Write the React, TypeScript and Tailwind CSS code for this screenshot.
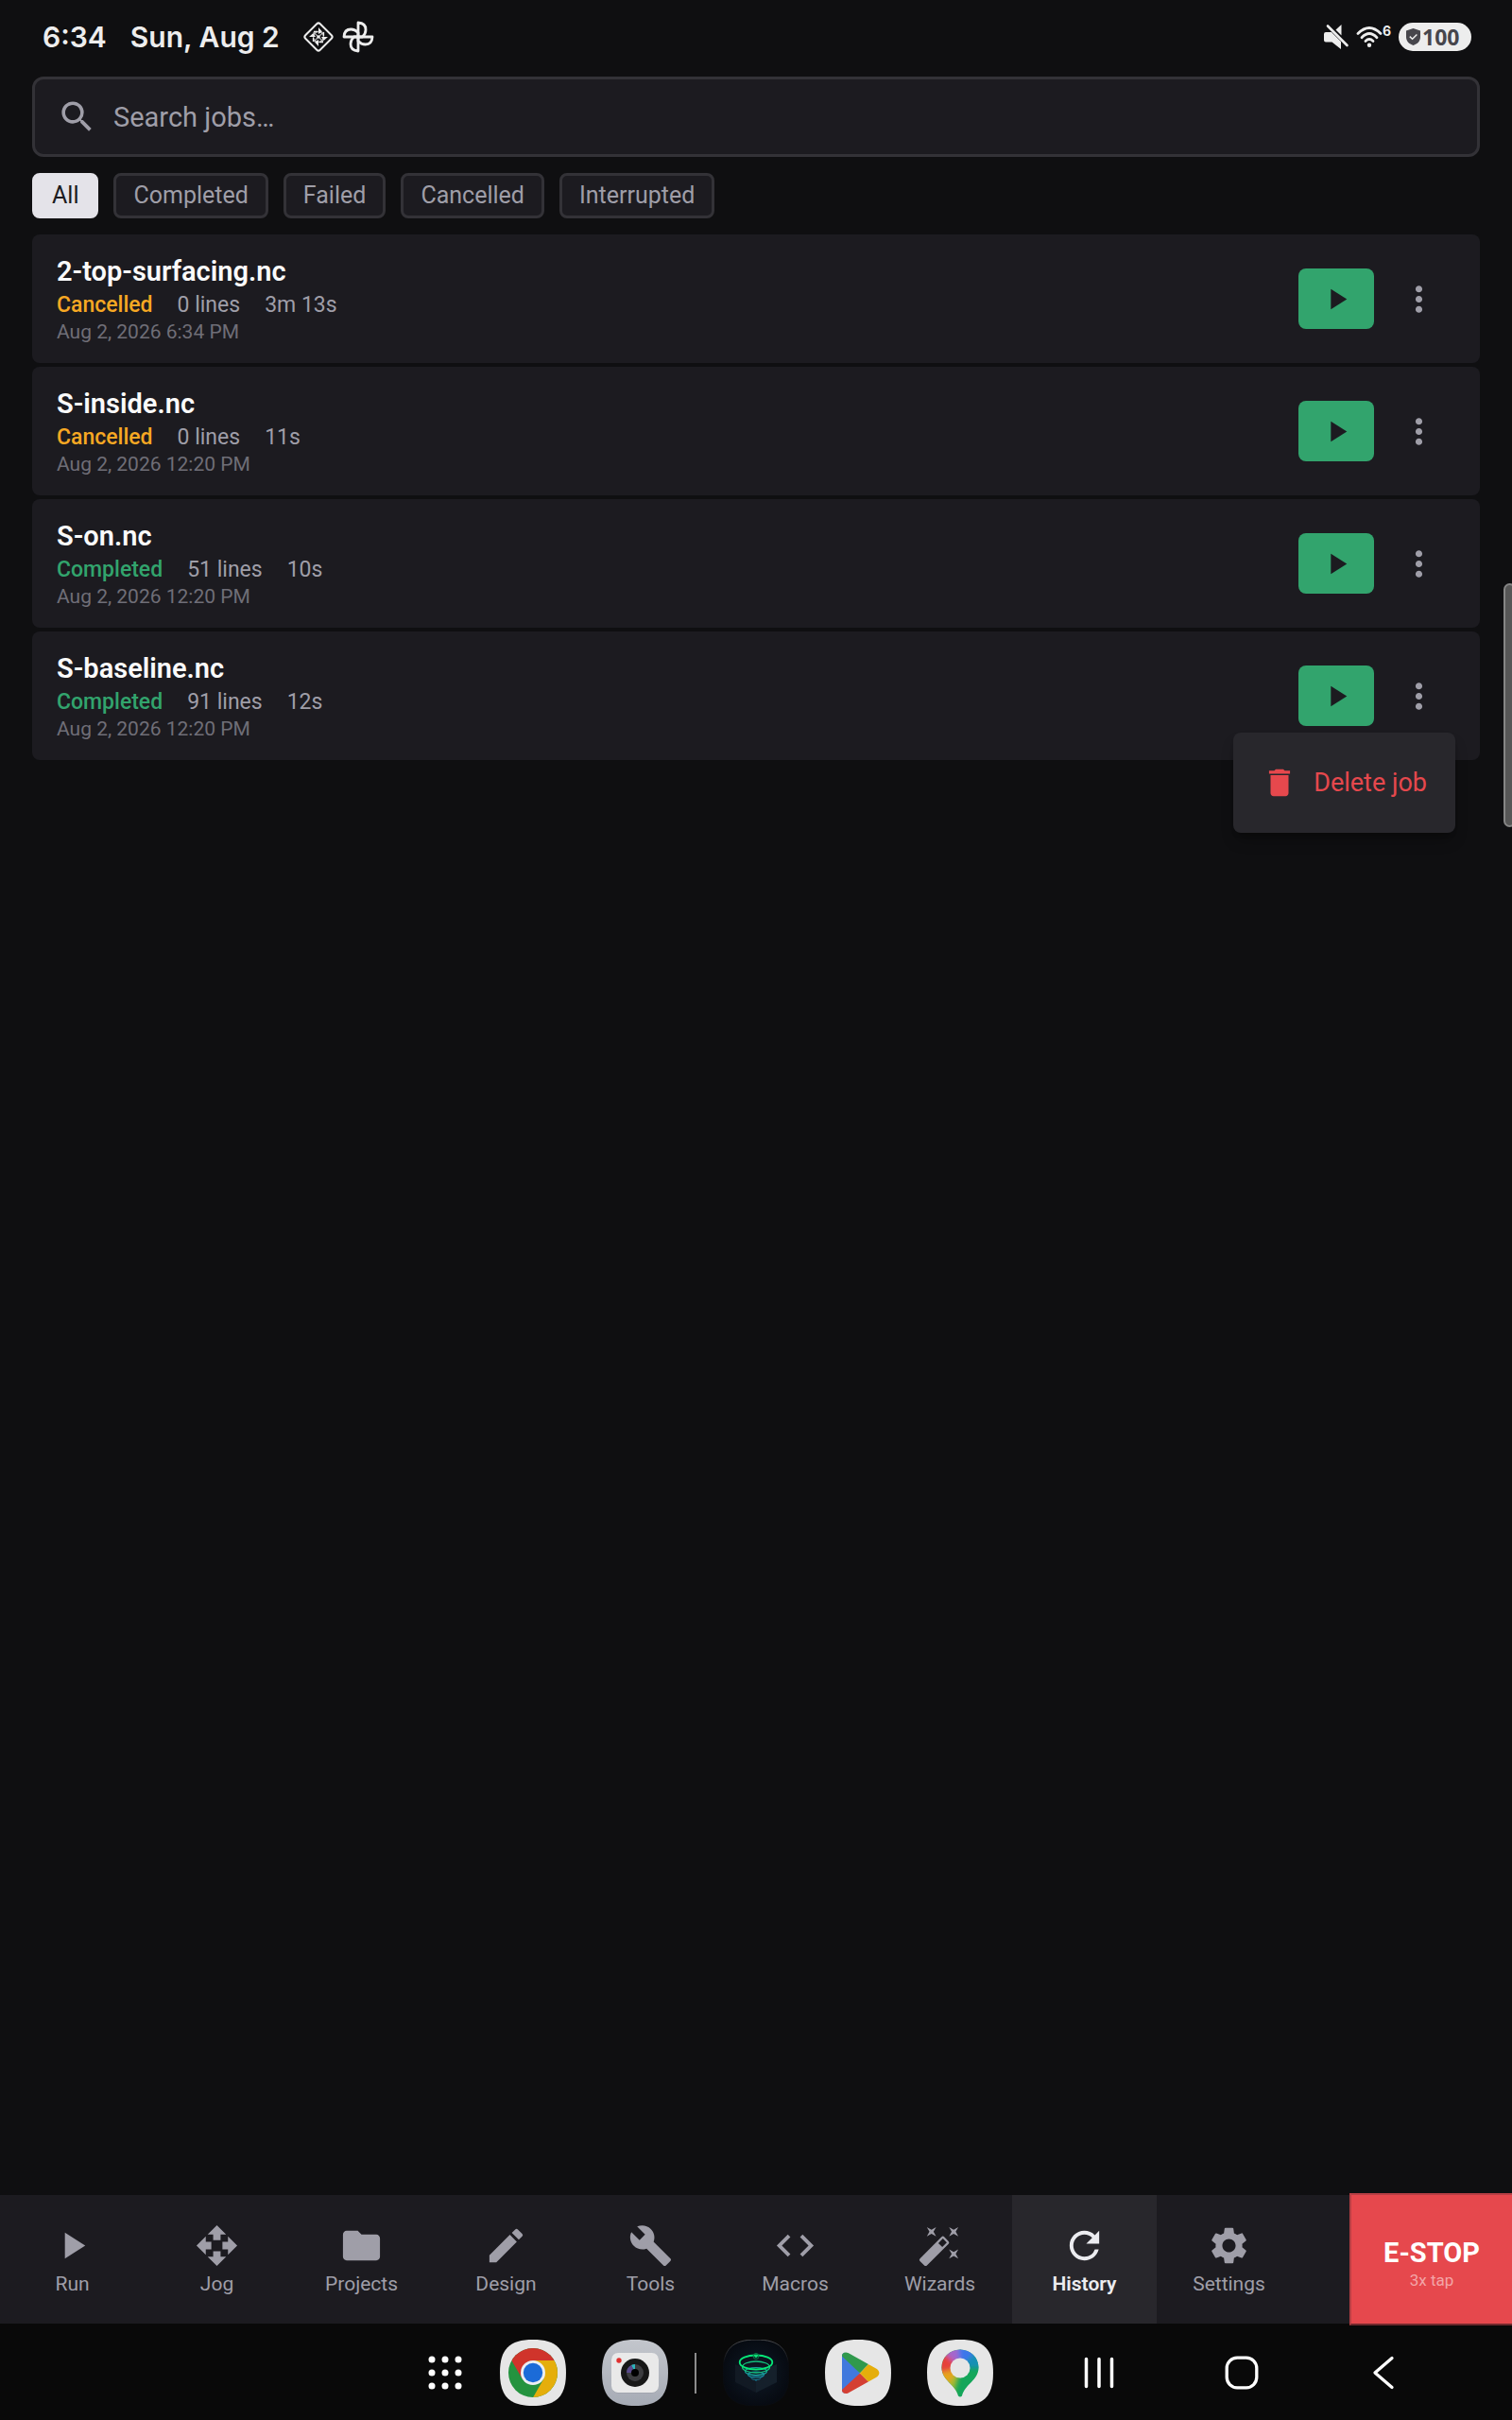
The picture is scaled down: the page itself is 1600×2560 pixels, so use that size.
import type { ReactNode } from "react";
import type { IconType } from "react-icons";
import {
  MdAutoFixHigh,
  MdBuild,
  MdCode,
  MdDelete,
  MdEdit,
  MdFolder,
  MdMoreVert,
  MdOpenWith,
  MdPlayArrow,
  MdRefresh,
  MdSearch,
  MdSettings,
} from "react-icons/md";

type Job = {
  name: string;
  status: "Completed" | "Cancelled";
  lines: string;
  duration: string;
  date: string;
};

const jobs: Job[] = [
  { name: "2-top-surfacing.nc", status: "Cancelled", lines: "0 lines", duration: "3m 13s", date: "Aug 2, 2026 6:34 PM" },
  { name: "S-inside.nc", status: "Cancelled", lines: "0 lines", duration: "11s", date: "Aug 2, 2026 12:20 PM" },
  { name: "S-on.nc", status: "Completed", lines: "51 lines", duration: "10s", date: "Aug 2, 2026 12:20 PM" },
  { name: "S-baseline.nc", status: "Completed", lines: "91 lines", duration: "12s", date: "Aug 2, 2026 12:20 PM" },
];

const filters = ["All", "Completed", "Failed", "Cancelled", "Interrupted"];

const tabs: { label: string; Icon: IconType }[] = [
  { label: "Run", Icon: MdPlayArrow },
  { label: "Jog", Icon: MdOpenWith },
  { label: "Projects", Icon: MdFolder },
  { label: "Design", Icon: MdEdit },
  { label: "Tools", Icon: MdBuild },
  { label: "Macros", Icon: MdCode },
  { label: "Wizards", Icon: MdAutoFixHigh },
  { label: "History", Icon: MdRefresh },
  { label: "Settings", Icon: MdSettings },
];

const SQUIRCLE = "M35 0C60 0 70 10 70 35S60 70 35 70S0 60 0 35S10 0 35 0Z";

function DiamondIcon() {
  return (
    <svg viewBox="0 0 34 34" className="size-[34px]" fill="none" stroke="#ededed">
      <rect x="6" y="6" width="22" height="22" rx="2.5" strokeWidth="2" transform="rotate(45 17 17)" />
      <g fill="#ededed" stroke="none">
        <path d="M17 7L21 11.500L17 14Z" />
        <path d="M27 17L22.500 21L20 17Z" />
        <path d="M17 27L13 22.500L17 20Z" />
        <path d="M7 17L11.500 13L14 17Z" />
      </g>
      <g strokeWidth="1.3">
        <path d="M12 11.500H16M22.500 12V16M22 22.500H18M11.500 22V18" />
        <path d="M11.500 12L16 16M22.500 12L18 16M22 22L18 18M12 22L16 18" opacity="0.7" />
        <circle cx="17" cy="17" r="5.500" opacity="0.7" />
      </g>
      <circle cx="17" cy="17" r="1.800" fill="#ededed" stroke="none" />
    </svg>
  );
}

function PinwheelIcon() {
  const blade = "M17 17V2C22 2.200 25 5 25 9.400C25 12.500 23.600 15 21.500 17Z";
  return (
    <svg viewBox="0 0 34 34" className="size-[34px]" fill="none" stroke="#ededed" strokeWidth="2.8" strokeLinejoin="round">
      <path d={blade} />
      <path d={blade} transform="rotate(90 17 17)" />
      <path d={blade} transform="rotate(180 17 17)" />
      <path d={blade} transform="rotate(270 17 17)" />
    </svg>
  );
}

function MuteIcon() {
  return (
    <svg viewBox="0 0 28 28" className="size-[28px]" fill="#ededed">
      <path d="M1 11Q1 9 3 9H9L19 19V27L9.500 19.500H3Q1 19.500 1 17.500Z" />
      <path d="M13.500 6.500L19.500 1V12.500Z" />
      <path d="M5 2.500L25.500 23" stroke="#ededed" strokeWidth="2.600" strokeLinecap="round" />
    </svg>
  );
}

function WifiIcon() {
  return (
    <svg viewBox="0 0 28 24" className="h-[24px] w-[28px]" fill="none" stroke="#ededed" strokeWidth="2.8" strokeLinecap="round">
      <path d="M2 8.500Q14 -3.500 26 8.500" />
      <path d="M6 12.700Q14 4.300 22 12.700" />
      <path d="M10 16.500Q14 12.600 18 16.500" />
      <circle cx="14" cy="20.800" r="2.200" fill="#ededed" stroke="none" />
    </svg>
  );
}

function StatusBar() {
  return (
    <header className="flex h-[78px] items-center justify-between pr-[43px] pl-[45px] font-['Inter',sans-serif] text-[#ededed]">
      <div className="flex items-center">
        <span className="text-[30px] leading-none font-semibold">6:34</span>
        <span className="ml-[25px] text-[30px] leading-none font-semibold">Sun, Aug 2</span>
        <span className="ml-[24px] flex gap-[8px]">
          <DiamondIcon />
          <PinwheelIcon />
        </span>
      </div>
      <div className="flex items-center">
        <MuteIcon />
        <span className="ml-[7px] flex items-start">
          <WifiIcon />
          <span className="text-[14px] leading-[12px] font-bold">6</span>
        </span>
        <span className="ml-[8px] flex h-[30px] w-[77px] items-center rounded-full bg-[#ededed] pl-[8px] text-[#47464c]">
          <svg viewBox="0 0 15 18" className="h-[18px] w-[15px]">
            <path d="M7.500 0L15 2.500V9C15 13.500 12 16.500 7.500 18C3 16.500 0 13.500 0 9V2.500Z" fill="#47464c" />
            <path d="M3.800 8.600L6.600 11.200L11.400 6.500" fill="none" stroke="#ededed" strokeWidth="1.500" />
          </svg>
          <span className="ml-[2px] font-['Open_Sans',sans-serif] text-[23px] leading-none font-bold">100</span>
        </span>
      </div>
    </header>
  );
}

function JobCard({ job, children }: { job: Job; children?: ReactNode }) {
  const statusColor = job.status === "Cancelled" ? "text-[#f7a823]" : "text-[#32a46d]";
  return (
    <li className="relative flex items-center rounded-lg bg-[#1c1b20] pt-[18px] pr-[26px] pb-[18px] pl-[26px]">
      <div className="min-w-0 flex-1 pb-[2px]">
        <h2 className="text-[29px] leading-[42px] font-semibold text-[#fafafa]">{job.name}</h2>
        <p className="flex gap-[26px] text-[23px] leading-[30px] text-[#9f9ea8]">
          <span className={`font-medium ${statusColor}`}>{job.status}</span>
          <span>{job.lines}</span>
          <span>{job.duration}</span>
        </p>
        <p className="text-[21px] leading-[26px] text-[#6f6e77]">{job.date}</p>
      </div>
      <button type="button" aria-label={`Run ${job.name}`} className="flex h-[64px] w-[80px] items-center justify-center rounded-lg bg-[#32a46d] text-[#1c1b20]">
        <MdPlayArrow className="size-[37px]" />
      </button>
      <button type="button" aria-label={`More actions for ${job.name}`} className="ml-[8px] flex h-[64px] w-[78px] items-center justify-center text-[#9f9ea8]">
        <MdMoreVert className="size-[43px]" />
      </button>
      {children}
    </li>
  );
}

function JobMenu() {
  return (
    <div role="menu" className="absolute top-[107px] right-[26px] z-10 rounded-lg bg-[#28272c] py-[8px] shadow-lg shadow-black/30">
      <button type="button" role="menuitem" className="flex h-[90px] items-center pr-[30px] pl-[30px] text-[27px] text-[#e6484d]">
        <MdDelete className="size-[38px]" />
        <span className="ml-[17px] whitespace-nowrap">Delete job</span>
      </button>
    </div>
  );
}

function TabBar() {
  return (
    <nav className="flex h-[136px] bg-[#1c1b20] text-[#9f9ea8]">
      {tabs.map(({ label, Icon }) => {
        const active = label === "History";
        return (
          <button
            key={label}
            type="button"
            aria-current={active ? "page" : undefined}
            className={`flex min-w-0 flex-[153] flex-col items-center pt-[30px] ${active ? "bg-[#28272c] font-semibold text-[#ececf0]" : ""}`}
          >
            <Icon className="size-[47px]" />
            <span className="mt-[4px] text-[21px] leading-[26px]">{label}</span>
          </button>
        );
      })}
      <div className="flex-[51]" />
      <button
        type="button"
        className="relative -my-[2px] flex w-[172px] shrink-0 flex-col items-center justify-center border-y-2 border-l-2 border-t-[#b83f44] border-b-[#70282c] border-l-[#b83f44] bg-[#e6484d] pt-[8px]"
      >
        <span className="text-[29px] leading-[36px] font-bold text-white">E-STOP</span>
        <span className="text-[17px] leading-[22px] text-[#f3a5a8]">3x tap</span>
      </button>
    </nav>
  );
}

function AppTile({ label, children }: { label: string; children: ReactNode }) {
  return (
    <button type="button" aria-label={label} className="size-[70px] shrink-0">
      <svg viewBox="0 0 70 70" className="size-[70px]">
        {children}
      </svg>
    </button>
  );
}

function ChromeTile() {
  return (
    <AppTile label="Chrome">
      <path d={SQUIRCLE} fill="#e6e6e6" />
      <clipPath id="chrome-disc">
        <circle cx="35" cy="35" r="26" />
      </clipPath>
      <g clipPath="url(#chrome-disc)">
        <rect width="70" height="70" fill="#24933f" />
        <path d="M35 22H70V70H30L46.300 41.500Z" fill="#e5ae0b" />
        <path d="M0 0H70V22H35L23.700 41.500L10 18Z" fill="#d0342b" />
      </g>
      <circle cx="35" cy="35" r="13" fill="#ebeef2" />
      <circle cx="35" cy="35" r="10.200" fill="#1b6bd8" />
    </AppTile>
  );
}

function CameraTile() {
  return (
    <AppTile label="Camera">
      <defs>
        <linearGradient id="camera-bg" x1="0" y1="0" x2="0" y2="1">
          <stop offset="0" stopColor="#c3c6cc" />
          <stop offset="1" stopColor="#a6abb5" />
        </linearGradient>
      </defs>
      <path d={SQUIRCLE} fill="url(#camera-bg)" />
      <rect x="10" y="14.500" width="50" height="42" rx="7" fill="#8d9199" opacity="0.600" />
      <rect x="10" y="14" width="50" height="42" rx="7" fill="#e9e9e9" />
      <circle cx="18" cy="22" r="2.700" fill="#e02f2f" />
      <circle cx="35" cy="35" r="15" fill="#171717" />
      <circle cx="35" cy="35" r="9" fill="#3d3d40" />
      <path d="M35 35V26A9 9 0 0 0 31 27Z" fill="#2cb3bb" />
      <path d="M35 35L31 27A9 9 0 0 0 26 35Z" fill="#5a4a8c" />
      <circle cx="35" cy="35" r="4" fill="#000" />
    </AppTile>
  );
}

function CncTile() {
  return (
    <AppTile label="CNC controller">
      <defs>
        <radialGradient id="cnc-bg">
          <stop offset="0" stopColor="#0f1a28" />
          <stop offset="1" stopColor="#070b12" />
        </radialGradient>
        <linearGradient id="cnc-rim" x1="0" y1="0" x2="0" y2="1">
          <stop offset="0" stopColor="#4a4b4e" />
          <stop offset="0.350" stopColor="#090c11" />
        </linearGradient>
      </defs>
      <path d={SQUIRCLE} fill="url(#cnc-bg)" stroke="url(#cnc-rim)" />
      <path d="M13 26L35 36L57 26V45L35 56L13 45Z" fill="#121a24" />
      <path d="M35 36L57 26V45L35 56Z" fill="#15202b" />
      <g fill="none">
        <ellipse cx="35" cy="40.500" rx="5" ry="2" stroke="#167690" />
        <ellipse cx="35" cy="37" rx="8.500" ry="3" stroke="#178a9c" strokeWidth="1.200" />
        <ellipse cx="35" cy="33.500" rx="11.500" ry="4" stroke="#17a19a" strokeWidth="1.200" />
        <ellipse cx="35" cy="29" rx="14.500" ry="6" stroke="#12c27e" strokeWidth="1.300" />
        <ellipse cx="35" cy="24" rx="17.300" ry="7.500" stroke="#07e878" strokeWidth="1.800" />
        <path d="M35 42V43.500" stroke="#167690" strokeWidth="2" />
        <circle cx="35" cy="17.500" r="3" stroke="#0a7a48" />
      </g>
      <circle cx="35" cy="17.500" r="1.500" fill="#0fdc76" />
    </AppTile>
  );
}

function PlayStoreTile() {
  return (
    <AppTile label="Play Store">
      <path d={SQUIRCLE} fill="#e6e6e6" />
      <clipPath id="play-shape">
        <path d="M18 17C18 14 21.500 12.500 24.500 14L54 30.500C58.500 33 58.500 37.500 54 40L24.500 56.500C21.500 58 18 56.500 18 53.500Z" />
      </clipPath>
      <g clipPath="url(#play-shape)">
        <path d="M18 10V60L37 35.500Z" fill="#4179dd" />
        <path d="M18 17.500V10H50L46 26L37 35.500Z" fill="#30994c" />
        <path d="M18 53V62H50L46 44.500L37 35.500Z" fill="#d43f33" />
        <path d="M46 26L62 30V42L46 44.500L37 35.500Z" fill="#e5ae0b" />
      </g>
    </AppTile>
  );
}

function MapsTile() {
  return (
    <AppTile label="Maps">
      <path d={SQUIRCLE} fill="#e6e6e6" />
      <clipPath id="maps-pin">
        <path d="M35 10.500C24 10.500 15.500 19 15.500 29.500C15.500 43 30 47 33 59.500Q35 61.500 37 59.500C40 47 54.500 43 54.500 29.500C54.500 19 46 10.500 35 10.500Z" />
      </clipPath>
      <filter id="maps-soft">
        <feGaussianBlur stdDeviation="2.500" />
      </filter>
      <g clipPath="url(#maps-pin)">
        <rect width="70" height="70" fill="#14a65a" />
        <g filter="url(#maps-soft)">
          <path d="M35 30L0 34V64H26L33 40Z" fill="#a6b932" />
          <path d="M35 30L0 32V44L18 52Z" fill="#e6a41c" />
          <path d="M35 30L0 38V14H20Z" fill="#e5433a" />
          <path d="M35 30L18 14L26 0L36 4Z" fill="#a566cc" />
          <path d="M35 30L32 0H60L52 18Z" fill="#3c77ea" />
          <path d="M35 30L50 14L70 10V30Z" fill="#1490b5" />
        </g>
      </g>
      <circle cx="35" cy="30" r="10.500" fill="#e6e6e6" />
    </AppTile>
  );
}

function Taskbar() {
  return (
    <footer className="flex h-[102px] items-center justify-end bg-[#090909] pt-[2px] pr-[60px]">
      <button type="button" aria-label="All apps" className="shrink-0">
        <svg viewBox="0 0 36 36" className="size-[36px]" fill="#fff">
          {[4, 18, 32].map((y) => [4, 18, 32].map((x) => <circle key={`${x}-${y}`} cx={x} cy={y} r="3.500" />))}
        </svg>
      </button>
      <div className="ml-[40px] flex gap-[38px]">
        <ChromeTile />
        <CameraTile />
      </div>
      <div className="mx-[28px] h-[43px] w-[2px] bg-[#8c8c8c]" />
      <div className="mr-[36px] flex gap-[38px]">
        <CncTile />
        <PlayStoreTile />
        <MapsTile />
      </div>
      <button type="button" aria-label="Recent apps" className="flex w-[151px] justify-center">
        <svg viewBox="0 0 36 36" className="size-[36px]" stroke="#fff" strokeWidth="3.500" strokeLinecap="round">
          <path d="M4.500 3.500V32.500M18 3.500V32.500M31.500 3.500V32.500" />
        </svg>
      </button>
      <button type="button" aria-label="Home" className="flex w-[151px] justify-center">
        <svg viewBox="0 0 36 36" className="size-[36px]" fill="none" stroke="#fff" strokeWidth="3.300">
          <rect x="2.200" y="2.200" width="31.600" height="31.600" rx="11" />
        </svg>
      </button>
      <button type="button" aria-label="Back" className="flex w-[151px] justify-center">
        <svg viewBox="0 0 36 36" className="size-[36px]" fill="none" stroke="#fff" strokeWidth="3.300" strokeLinecap="round" strokeLinejoin="round">
          <path d="M26 2.500L8 18L26 33.500" />
        </svg>
      </button>
    </footer>
  );
}

export default function App() {
  return (
    <div className="relative flex min-h-screen flex-col overflow-hidden bg-[#0f0f11] font-['Roboto',sans-serif]">
      <StatusBar />
      <main className="flex flex-1 flex-col px-[34px] pt-[3px]">
        <label className="flex h-[85px] items-center rounded-xl border-3 border-[#333237] bg-[#1c1b20] pl-[23px]">
          <MdSearch className="size-[43px] shrink-0 text-[#9f9ea8]" />
          <input
            type="text"
            aria-label="Search jobs"
            placeholder="Search jobs…"
            className="ml-[17px] h-full min-w-0 flex-1 bg-transparent text-[29px] text-white outline-none placeholder:text-[#9f9ea8]"
          />
        </label>
        <div className="mt-[17px] flex gap-[16px]">
          {filters.map((name) => (
            <button
              key={name}
              type="button"
              aria-pressed={name === "All"}
              className={`flex h-[48px] items-center rounded-lg border-3 px-[18px] text-[25px] ${
                name === "All" ? "border-[#e4e3e9] bg-[#e4e3e9] text-[#1c1b20]" : "border-[#333237] bg-[#1c1b20] text-[#9f9ea8]"
              }`}
            >
              {name}
            </button>
          ))}
        </div>
        <ul className="mt-[17px] flex flex-col gap-[4px]">
          {jobs.map((job, i) => (
            <JobCard key={job.name} job={job}>
              {i === jobs.length - 1 && <JobMenu />}
            </JobCard>
          ))}
        </ul>
      </main>
      <div className="absolute top-[617px] -right-[4px] h-[258px] w-[13px] rounded-lg border-2 border-[#858585] bg-[#565656]" />
      <TabBar />
      <Taskbar />
    </div>
  );
}
